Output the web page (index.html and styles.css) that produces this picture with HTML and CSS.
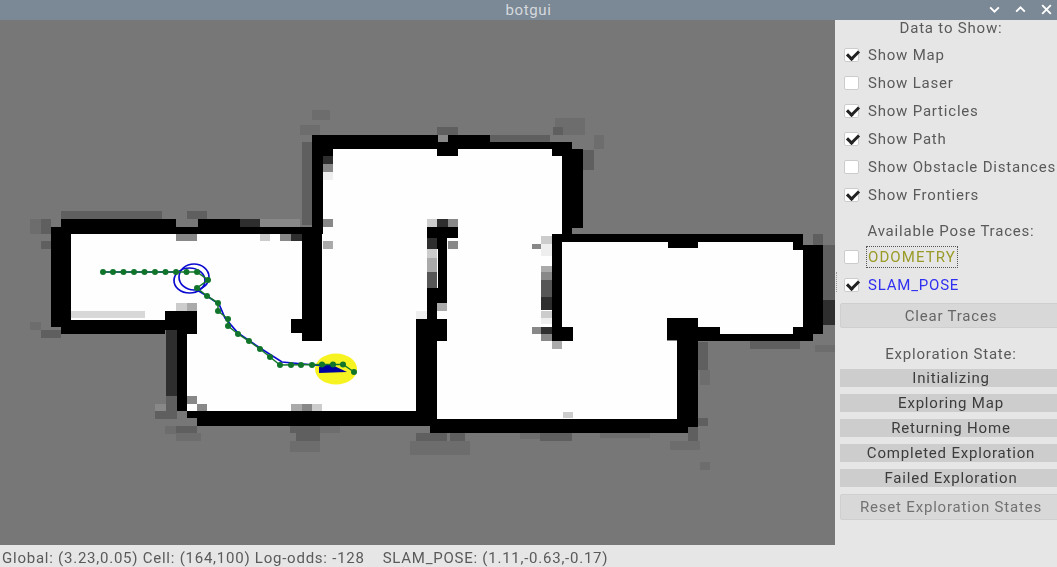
FILE: index.html
```html
<!DOCTYPE html>
<html lang="en">
<head>
<meta charset="utf-8">
<title>botgui</title>
<link rel="stylesheet" href="styles.css">
</head>
<body>
<div class="window">
  <header class="titlebar">
    <span class="title">botgui</span>
    <div class="controls">
      <svg class="ctl" viewBox="0 0 12 12"><path d="M2 4l4 4 4-4"/></svg>
      <svg class="ctl" viewBox="0 0 12 12"><path d="M2 8l4-4 4 4"/></svg>
      <svg class="ctl" viewBox="0 0 12 12"><path d="M2 2l8 8M10 2l-8 8"/></svg>
    </div>
  </header>
  <div class="main">
    <svg class="map" viewBox="0 20 835 525" shape-rendering="crispEdges">
      <rect class="bg" x="0" y="20" width="835" height="525"/>
      <path class="g7" d="M312 110h18v10h-18zM555 118h30v17h-30zM300 125h20v10h-20zM30 219h11v15H30zM165 426h11v8h-11zM176 433h25v8h-25zM290 441h30v11h-30zM410 441h60v14h-60zM670 441h30v9h-30zM700 462h10v8h-10zM815 345h20v7h-20zM594 135h10v14h-10zM320 426h20v7h-20zM30 322h11v8H30zM700 370h10v15h-10zM520 433h20v6h-20zM600 433h50v5h-50z"/>
      <path class="free" d="M71 234H312V172H333V149H562V242H803V334H698V318H677V419H437V341H427V411H187V334H197V311H165V320H71Z"/>
      <path class="g6" d="M61 211h101v8H61zM187 211h20v8h-20zM41 219h10v15H41zM41 241h10v8H41zM302 142h10v83h-10zM437 127h21v8h-21zM553 127h10v8h-10zM583 150h11v20h-11zM176 426h21v7h-21zM290 426h30v7h-30zM296 433h24v8h-24zM540 433h32v8h-32zM416 433h31v8h-31zM698 342h10v28h-10zM698 418h10v8h-10zM688 427h10v14h-10zM750 341h50v8h-50zM823 245h12v55h-12zM813 234h10v11h-10zM166 396h11v15h-11zM450 433h15v8h-15zM41 330h20v8H41zM490 135h60v7h-60zM155 411h22v8h-22z"/>
      <path class="g3" d="M166 330h11v66h-11zM416 341h11v70h-11zM677 340h10v70h-10zM823 300h12v25h-12zM541 297h11v13h-11zM240 219h20v8h-20zM323 156h10v8h-10zM71 227h11v7H71zM291 234h11v7h-11zM682 234h8v8h-8zM562 158h10v12h-10zM427 234h10v15h-10zM437 219h11v8h-11zM541 327h11v7h-11z"/>
      <path class="g8" d="M260 219h40v8h-40zM323 164h10v8h-10zM323 219h10v8h-10zM176 234h21v7h-21zM280 234h11v7h-11zM448 241h10v8h-10zM448 219h10v8h-10zM532 244h9v5h-9zM541 272h11v8h-11zM532 327h9v7h-9zM541 334h11v7h-11zM667 327h10v14h-10zM187 396h10v8h-10zM155 404h11v7h-11zM197 404h10v7h-10zM302 404h10v7h-10zM438 135h10v7h-10zM165 311h11v7h-11z"/>
      <path class="g5" d="M427 272h10v16h-10zM541 280h11v17h-11z"/>
      <path class="ga" d="M82 227h83v7H82zM61 265h10v20H61zM427 258h10v14h-10zM541 266h11v6h-11zM552 341h10v8h-10zM416 335h11v6h-11zM323 241h10v8h-10zM291 404h11v7h-11zM437 303h10v8h-10zM187 303h10v8h-10z"/>
      <path class="gc" d="M61 285h10v11H61zM427 219h10v8h-10zM427 249h10v9h-10zM176 303h11v8h-11zM312 404h10v7h-10zM260 234h10v7h-10zM541 236h11v8h-11zM647 419h20v7h-20zM563 412h10v6h-10zM541 311h11v7h-11z"/>
      <path class="gd" d="M71 311h74v7H71z"/>
      <path class="ge" d="M541 244h11v12h-11zM541 318h11v6h-11zM323 172h10v8h-10zM416 311h11v8h-11z"/>
      <path class="wall" fill-rule="evenodd" d="M51 227H61V219H176V227H198V219H240V227H312V135H438V142H448V135H490V142H572V149H583V228H572V234H803V245H823V334H813V341H698V427H688V433H430V426H197V418H187V411H177V330H165V334H61V327H51ZM71 234V320H165V311H197V334H187V411H416V319H427V288H438V249H437V238H427V227H458V238H447V303H437V319H447V341H437V419H677V340H667V318H698V327H720V334H793V327H803V250H793V242H562V327H573V341H552V234H562V149H333V156H323V234H322V341H302V333H291V319H302V234Z"/>
      <path class="wall" d="M552 149h10v7h-10zM437 149h21v7h-21zM668 242h30v6h-30zM618 419h22v7h-22z"/>
      <g class="trace" shape-rendering="auto">
        <ellipse class="yellow" cx="336" cy="369" rx="21" ry="15.5"/>
        <polygon class="pose" points="319,367 330,364 347,372 319,373"/>
        <ellipse class="blue" cx="194" cy="277" rx="15" ry="13"/>
        <ellipse class="blue" cx="189.500" cy="280.500" rx="15.500" ry="12.500"/>
        <polyline class="blue" points="103,272 180,272"/>
        <polyline class="blue" points="197,290 207,296 219,304 225,318 238,333 260,348 282,362 320,365.500"/>
        <polyline class="green" points="103,272 197,272 208,280 197,288 207,296 218,303 218,311 228,319 228,326 238,334 249,341 260,349 270,357 280,365 322,364.500 343,364.500 354,372"/>
        <g class="dots">
          <circle cx="103" cy="272" r="3"/><circle cx="113" cy="272" r="3"/><circle cx="123.500" cy="272" r="3"/><circle cx="134" cy="272" r="3"/><circle cx="144.500" cy="272" r="3"/><circle cx="155" cy="272" r="3"/><circle cx="165.500" cy="272" r="3"/><circle cx="176" cy="272" r="3"/><circle cx="186.500" cy="272" r="3"/><circle cx="197" cy="272" r="3"/><circle cx="208" cy="280" r="3"/><circle cx="197" cy="288" r="3"/><circle cx="207" cy="296" r="3"/><circle cx="218" cy="303" r="3"/><circle cx="218" cy="311" r="3"/><circle cx="228" cy="319" r="3"/><circle cx="228" cy="326" r="3"/><circle cx="238" cy="334" r="3"/><circle cx="249" cy="341" r="3"/><circle cx="260" cy="349" r="3"/><circle cx="270" cy="357" r="3"/><circle cx="280" cy="365" r="3"/><circle cx="291" cy="365" r="3"/><circle cx="301" cy="365" r="3"/><circle cx="312" cy="365" r="3"/><circle cx="322" cy="364.500" r="3"/><circle cx="333" cy="364.500" r="3"/><circle cx="343" cy="364.500" r="3"/><circle cx="354" cy="372" r="3"/>
        </g>
      </g>
    </svg>
    <aside class="panel">
      <div class="splitter"></div>
      <div class="heading first">Data to Show:</div>
      <label class="row"><span class="box on"></span>Show Map</label>
      <label class="row"><span class="box"></span>Show Laser</label>
      <label class="row"><span class="box on"></span>Show Particles</label>
      <label class="row"><span class="box on"></span>Show Path</label>
      <label class="row"><span class="box"></span>Show Obstacle Distances</label>
      <label class="row"><span class="box on"></span>Show Frontiers</label>
      <div class="heading pose-head">Available Pose Traces:</div>
      <label class="row"><span class="box"></span><span class="odometry">ODOMETRY</span></label>
      <label class="row"><span class="box on"></span><span class="slam">SLAM_POSE</span></label>
      <button class="btn clear">Clear Traces</button>
      <div class="heading state-head">Exploration State:</div>
      <div class="states">
        <div class="state">Initializing</div>
        <div class="state">Exploring Map</div>
        <div class="state">Returning Home</div>
        <div class="state">Completed Exploration</div>
        <div class="state">Failed Exploration</div>
      </div>
      <button class="btn reset">Reset Exploration States</button>
    </aside>
  </div>
  <footer class="status">Global: (3.23,0.05) Cell: (164,100) Log-odds: -128 &nbsp;&nbsp; SLAM_POSE: (1.11,-0.63,-0.17)</footer>
</div>
</body>
</html>
```
FILE: styles.css
```css
* { box-sizing: border-box; }
html, body { margin: 0; height: 100%; overflow: hidden; background: #e6e6e6; }
body { font-family: Roboto, "Liberation Sans", sans-serif; font-size: 15px; letter-spacing: 0.8px; color: #5a5a5a; }
.window { width: 1057px; height: 567px; display: flex; flex-direction: column; overflow: hidden; filter: blur(0.4px); }
.titlebar { height: 20px; flex: none; background: #7b8895; display: flex; align-items: center; justify-content: center; position: relative; }
.title { color: #d5d9dd; font-size: 15px; letter-spacing: 0.6px; }
.controls { position: absolute; right: 4px; top: 3px; display: flex; gap: 13px; }
.ctl { width: 13px; height: 13px; fill: none; stroke: #fff; stroke-width: 1.8; }
.main { height: 525px; flex: none; display: flex; }
.map { width: 835px; height: 525px; flex: none; display: block; }
.bg { fill: #777; }
.free { fill: #fefefe; }
.wall { fill: #000; }
.g3 { fill: #2e2e2e; }
.g5 { fill: #565656; }
.g6 { fill: #5f5f5f; }
.g7 { fill: #6d6d6d; }
.g8 { fill: #888; }
.ga { fill: #aaa; }
.gc { fill: #ccc; }
.gd { fill: #d8d8d8; }
.ge { fill: #eee; }
.yellow { fill: #f7f320; }
.pose { fill: #00009f; }
.trace .blue { fill: none; stroke: #0a0ad0; stroke-width: 1.7; }
.trace .green { fill: none; stroke: #14782a; stroke-width: 1.5; }
.dots { fill: #10752a; }
.panel { width: 222px; flex: none; position: relative; padding-left: 5px; overflow: hidden; }
.splitter { position: absolute; left: 1px; top: 252px; height: 20px; border-left: 1px dotted #999; }
.heading { height: 18px; width: 222px; line-height: 18px; text-align: center; white-space: nowrap; }
.first { margin-bottom: 4px; height: 17px; line-height: 16px; }
.pose-head { margin-top: 13px; margin-bottom: 3px; }
.state-head { margin-top: 17px; margin-bottom: -1px; }
.row { display: flex; align-items: center; height: 28px; white-space: nowrap; padding-left: 4px; }
.box { width: 15px; height: 14px; margin-right: 9px; flex: none; background: #fff; border: 1px solid #ccc; border-radius: 2px; position: relative; }
.box.on::after { content: ""; position: absolute; left: 2px; top: 1px; width: 9px; height: 5px; border-left: 3px solid #222; border-bottom: 3px solid #222; transform: rotate(-45deg); }
.odometry { color: #9a9a28; border: 1px dotted #555; padding: 1px; margin-left: -2px; letter-spacing: 1.1px; }
.slam { color: #3030f0; }
.btn { display: block; width: 222px; height: 25px; padding: 0; font: inherit; letter-spacing: inherit; color: #666; background: #d8d8d8; border: 1px solid #cfcfcf; border-radius: 2px; }
.clear { margin-top: 4px; }
.reset { height: 26px; margin-top: 7px; color: #727272; }
.states { display: flex; flex-direction: column; gap: 7px; margin-top: 7px; }
.state { width: 222px; height: 18px; line-height: 19px; text-align: center; background: #cdcdcd; color: #3c3c3c; }
.status { height: 22px; flex: none; line-height: 27px; padding-left: 2px; white-space: nowrap; letter-spacing: 0.76px; }
```
